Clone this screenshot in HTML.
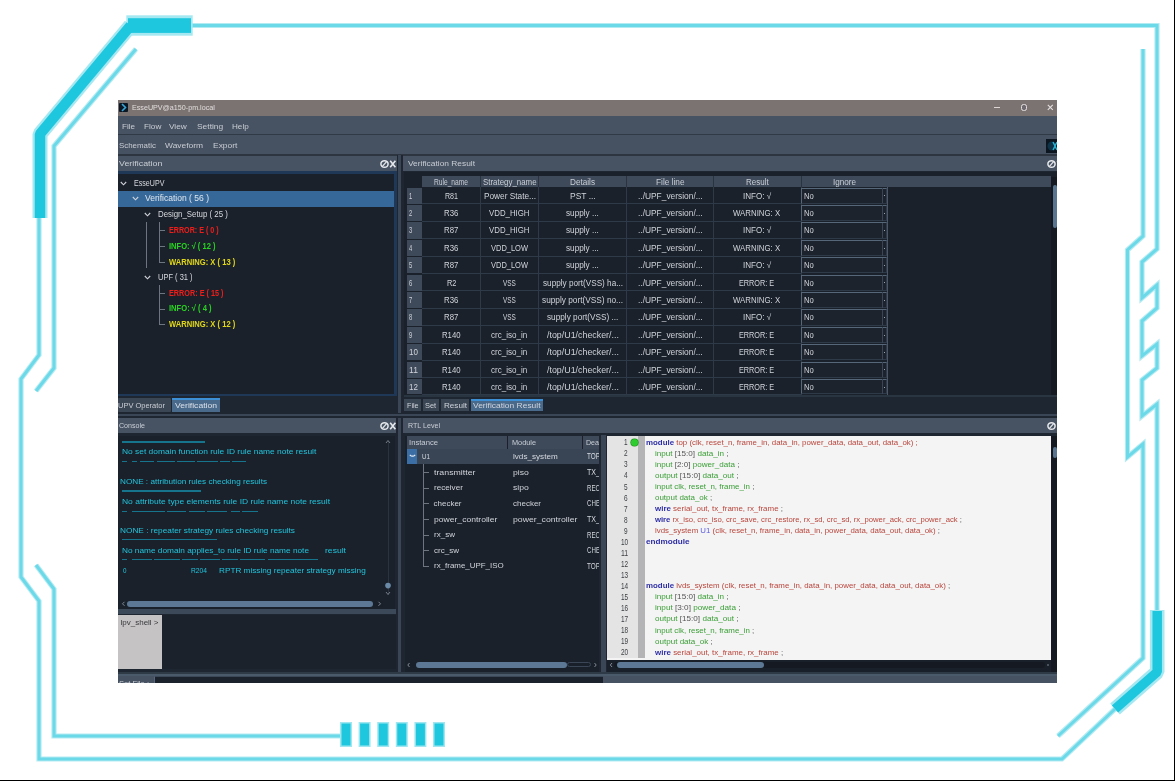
<!DOCTYPE html>
<html><head><meta charset="utf-8"><style>
html,body{margin:0;padding:0;width:1175px;height:781px;overflow:hidden;background:#fff;}
body{position:relative;filter:blur(0.4px);font-family:"Liberation Sans", sans-serif;}
body > div, body > span, body > svg{position:absolute;box-sizing:border-box;}
body > span{white-space:nowrap;transform-origin:0 50%;}
svg{position:absolute;left:0;top:0;}
</style></head><body>
<svg width="1175" height="781">
<polyline points="192,25.5 1157,25.5 1157,249 1142,262 1142,298 1157,285 1157,308 1142,321 1142,356 1157,344 1157,368 1142,380 1142,416 1157,404 1157,612" fill="none" stroke="#b3ebf3" stroke-width="5.2" stroke-linejoin="miter"/>
<polyline points="1115,709 1062,759 39,759 39,601 21,577 21,379 39,355 39,218" fill="none" stroke="#b3ebf3" stroke-width="5.2" stroke-linejoin="miter"/>
<polyline points="136,49 54,146 54,368 36,391" fill="none" stroke="#b3ebf3" stroke-width="5.2" stroke-linejoin="miter"/>
<polyline points="36,565 54,589 54,736 340,736" fill="none" stroke="#b3ebf3" stroke-width="5.2" stroke-linejoin="miter"/>
<polyline points="1143,49 1143,236 1127.5,250 1127.5,457 1143,444 1143,658 1058,736" fill="none" stroke="#b3ebf3" stroke-width="5.2" stroke-linejoin="miter"/>
<polyline points="192,25.5 1157,25.5 1157,249 1142,262 1142,298 1157,285 1157,308 1142,321 1142,356 1157,344 1157,368 1142,380 1142,416 1157,404 1157,612" fill="none" stroke="#6cd9e8" stroke-width="3" stroke-linejoin="miter"/>
<polyline points="1115,709 1062,759 39,759 39,601 21,577 21,379 39,355 39,218" fill="none" stroke="#6cd9e8" stroke-width="3" stroke-linejoin="miter"/>
<polyline points="136,49 54,146 54,368 36,391" fill="none" stroke="#6cd9e8" stroke-width="3" stroke-linejoin="miter"/>
<polyline points="36,565 54,589 54,736 340,736" fill="none" stroke="#6cd9e8" stroke-width="3" stroke-linejoin="miter"/>
<polyline points="1143,49 1143,236 1127.5,250 1127.5,457 1143,444 1143,658 1058,736" fill="none" stroke="#6cd9e8" stroke-width="3" stroke-linejoin="miter"/>
<polyline points="40,218 40,134 130.7,25.5" fill="none" stroke="#a6e8f1" stroke-width="15" stroke-linejoin="bevel"/>
<rect x="126.3" y="15.3" width="66.4" height="20.4" fill="#a6e8f1"/>
<polyline points="40,218 40,134 130.7,25.5" fill="none" stroke="#1ec7de" stroke-width="10.5" stroke-linejoin="bevel"/>
<rect x="128" y="18.2" width="63" height="14.7" fill="#1ec7de"/>
<polyline points="1157.2,610 1157.2,672 1115,709" fill="none" stroke="#a6e8f1" stroke-width="14.6" stroke-linejoin="bevel"/>
<polyline points="1157.2,611 1157.2,672 1115,709" fill="none" stroke="#1ec7de" stroke-width="9.5" stroke-linejoin="bevel"/>
<rect x="340.0" y="722" width="12" height="25" fill="#9fe6f0"/>
<rect x="341.5" y="723.5" width="9" height="22" fill="#1ec7de"/>
<rect x="358.6" y="722" width="12" height="25" fill="#9fe6f0"/>
<rect x="360.1" y="723.5" width="9" height="22" fill="#1ec7de"/>
<rect x="377.2" y="722" width="12" height="25" fill="#9fe6f0"/>
<rect x="378.7" y="723.5" width="9" height="22" fill="#1ec7de"/>
<rect x="395.8" y="722" width="12" height="25" fill="#9fe6f0"/>
<rect x="397.3" y="723.5" width="9" height="22" fill="#1ec7de"/>
<rect x="414.4" y="722" width="12" height="25" fill="#9fe6f0"/>
<rect x="415.9" y="723.5" width="9" height="22" fill="#1ec7de"/>
<rect x="433.0" y="722" width="12" height="25" fill="#9fe6f0"/>
<rect x="434.5" y="723.5" width="9" height="22" fill="#1ec7de"/>
<rect x="1174" y="0" width="1" height="781" fill="#000"/>
<rect x="0" y="780" width="1175" height="1" fill="#000"/>
</svg>
<div style="left:118px;top:100px;width:939px;height:16px;background:#7a7372;"></div><div style="left:118px;top:116px;width:939px;height:18px;background:#475262;"></div><div style="left:118px;top:134px;width:939px;height:1px;background:#303a46;"></div><div style="left:118px;top:135px;width:939px;height:20px;background:#465161;"></div><div style="left:118px;top:155px;width:939px;height:528px;background:#222a35;"></div><div style="left:118px;top:154.3px;width:939px;height:1.6999999999999886px;background:#2c3540;"></div><div style="left:118px;top:156px;width:278.5px;height:15.5px;background:#475363;"></div><div style="left:118px;top:171px;width:278.5px;height:225px;background:#1f3857;"></div><div style="left:118px;top:174px;width:275.5px;height:220px;background:#1b212b;"></div><div style="left:118px;top:396px;width:278.5px;height:17px;background:#1e2631;"></div><div style="left:397px;top:155px;width:6px;height:258px;background:#1f2631;"></div><div style="left:398px;top:155px;width:3px;height:258px;background:#3a4656;"></div><div style="left:403px;top:156px;width:654px;height:15.5px;background:#475363;"></div><div style="left:403px;top:171px;width:654px;height:242px;background:#1e2631;"></div><div style="left:404px;top:172px;width:653px;height:224px;background:#1b212b;"></div><div style="left:118px;top:413px;width:939px;height:5px;background:#1e2631;"></div><div style="left:118px;top:413.5px;width:939px;height:2.1999999999999886px;background:#3a4656;"></div><div style="left:118px;top:418px;width:278px;height:15px;background:#475363;"></div><div style="left:118px;top:433px;width:278px;height:239px;background:#1e2631;"></div><div style="left:118px;top:436px;width:277px;height:172.60000000000002px;background:#1b212b;"></div><div style="left:118px;top:608.6px;width:278px;height:5.399999999999977px;background:#3c4958;"></div><div style="left:118px;top:615px;width:44px;height:54px;background:#c5c3c4;"></div><div style="left:162px;top:615px;width:234px;height:54px;background:#1c222c;"></div><div style="left:396px;top:418px;width:7px;height:254px;background:#1f2631;"></div><div style="left:397.5px;top:418px;width:3.5px;height:254px;background:#3a4656;"></div><div style="left:403px;top:418px;width:654px;height:15px;background:#475363;"></div><div style="left:403px;top:433px;width:654px;height:239px;background:#1e2631;"></div><div style="left:405px;top:435.5px;width:194px;height:236.5px;background:#1b212b;"></div><div style="left:601.4px;top:435px;width:4.600000000000023px;height:237px;background:#3a4656;"></div><div style="left:607px;top:436px;width:444px;height:224px;background:#f4f4f4;"></div><div style="left:118px;top:672px;width:939px;height:4px;background:#2f3a47;"></div><div style="left:118px;top:674.3px;width:939px;height:1.5px;background:#4a5a6b;"></div><div style="left:118px;top:676px;width:939px;height:7px;background:#465262;"></div><div style="left:154px;top:676px;width:449px;height:7px;background:#1c222c;border-left:1px solid #56667a;border-top:1px solid #3a4858;"></div><div style="left:118.6px;top:102.8px;width:9.5px;height:8.900000000000006px;background:#0b1824;border-radius:1px;"></div><svg style="left:119px;top:103px" width="9" height="9"><polyline points="3,1 6.5,4.5 3,8" fill="none" stroke="#3aa6d6" stroke-width="1.6"/></svg><span style="left:131.70px;top:102.70px;font-size:8px;line-height:9.60px;color:#e2dcdc;font-family:'Liberation Sans', sans-serif;transform:scaleX(0.8941);">EsseUPV@a150-pm.local</span><div style="left:994px;top:107px;width:5.600000000000023px;height:1.2000000000000028px;background:#ddd6d6;"></div><div style="left:1021px;top:104px;width:6px;height:7px;background:#6f6a70;border:1.2px solid #e6e0e0;border-radius:2.5px;"></div><svg style="left:1047px;top:104px" width="7" height="7"><path d="M0.8,0.8 L5.8,5.8 M5.8,0.8 L0.8,5.8" stroke="#e6e0e0" stroke-width="1.1"/></svg><span style="left:122.20px;top:121.50px;font-size:8px;line-height:9.60px;color:#c8cdd4;font-family:'Liberation Sans', sans-serif;transform:scaleX(1.0162);">File</span><span style="left:143.60px;top:121.50px;font-size:8px;line-height:9.60px;color:#c8cdd4;font-family:'Liberation Sans', sans-serif;transform:scaleX(1.0242);">Flow</span><span style="left:169.30px;top:121.50px;font-size:8px;line-height:9.60px;color:#c8cdd4;font-family:'Liberation Sans', sans-serif;transform:scaleX(1.0347);">View</span><span style="left:196.70px;top:121.50px;font-size:8px;line-height:9.60px;color:#c8cdd4;font-family:'Liberation Sans', sans-serif;transform:scaleX(1.0519);">Setting</span><span style="left:231.80px;top:121.50px;font-size:8px;line-height:9.60px;color:#c8cdd4;font-family:'Liberation Sans', sans-serif;transform:scaleX(1.0150);">Help</span><span style="left:119.20px;top:141.40px;font-size:8px;line-height:9.60px;color:#c8cdd4;font-family:'Liberation Sans', sans-serif;transform:scaleX(0.9877);">Schematic</span><span style="left:165.10px;top:141.40px;font-size:8px;line-height:9.60px;color:#c8cdd4;font-family:'Liberation Sans', sans-serif;transform:scaleX(1.0538);">Waveform</span><span style="left:212.80px;top:141.40px;font-size:8px;line-height:9.60px;color:#c8cdd4;font-family:'Liberation Sans', sans-serif;transform:scaleX(1.0551);">Export</span><div style="left:1046px;top:139.3px;width:11px;height:14.0px;background:#0c1620;"></div><svg style="left:1046px;top:139px" width="11" height="14"><circle cx="6" cy="7" r="4.5" fill="#0f3448"/><path d="M7,3 L11,11 M11,3 L7,11" stroke="#27b7d9" stroke-width="1.4"/></svg><span style="left:118.90px;top:159.00px;font-size:8px;line-height:9.60px;color:#c8cdd4;font-family:'Liberation Sans', sans-serif;transform:scaleX(1.1088);">Verification</span><svg style="left:380px;top:159px" width="17" height="10"><ellipse cx="4.5" cy="5" rx="3.6" ry="3.3" fill="none" stroke="#e6e8ec" stroke-width="1.5"/><line x1="2.2" y1="7.6" x2="6.8" y2="2.4" stroke="#e6e8ec" stroke-width="1.3"/><path d="M10.2,1.8 L15.4,8.2 M15.4,1.8 L10.2,8.2" stroke="#e6e8ec" stroke-width="1.6"/></svg><div style="left:118px;top:191px;width:275.5px;height:15.5px;background:#36699a;"></div><svg style="left:119.9px;top:180.9px" width="7" height="5"><polyline points="0.8,1 3.5,3.8 6.2,1" fill="none" stroke="#cfd3da" stroke-width="1.1"/></svg><svg style="left:132.1px;top:196.3px" width="7" height="5"><polyline points="0.8,1 3.5,3.8 6.2,1" fill="none" stroke="#cfd3da" stroke-width="1.1"/></svg><svg style="left:144.0px;top:212.1px" width="7" height="5"><polyline points="0.8,1 3.5,3.8 6.2,1" fill="none" stroke="#cfd3da" stroke-width="1.1"/></svg><svg style="left:144.0px;top:274.9px" width="7" height="5"><polyline points="0.8,1 3.5,3.8 6.2,1" fill="none" stroke="#cfd3da" stroke-width="1.1"/></svg><span style="left:134.00px;top:178.00px;font-size:9px;line-height:10.80px;color:#d6d9de;font-family:'Liberation Sans', sans-serif;transform:scaleX(0.7893);">EsseUPV</span><span style="left:144.60px;top:193.40px;font-size:9px;line-height:10.80px;color:#dfe6ee;font-family:'Liberation Sans', sans-serif;transform:scaleX(0.9477);">Verification ( 56 )</span><span style="left:158.00px;top:209.40px;font-size:9px;line-height:10.80px;color:#d6d9de;font-family:'Liberation Sans', sans-serif;transform:scaleX(0.8720);">Design_Setup ( 25 )</span><span style="left:158.00px;top:272.20px;font-size:9px;line-height:10.80px;color:#d6d9de;font-family:'Liberation Sans', sans-serif;transform:scaleX(0.8334);">UPF ( 31 )</span><span style="left:169.20px;top:224.80px;font-size:9px;line-height:10.80px;color:#f01e1a;font-weight:bold;font-family:'Liberation Sans', sans-serif;transform:scaleX(0.7950);">ERROR: E ( 0 )</span><span style="left:169.20px;top:240.80px;font-size:9px;line-height:10.80px;color:#26d421;font-weight:bold;font-family:'Liberation Sans', sans-serif;transform:scaleX(0.8385);">INFO: √ ( 12 )</span><span style="left:169.20px;top:256.50px;font-size:9px;line-height:10.80px;color:#e2d916;font-weight:bold;font-family:'Liberation Sans', sans-serif;transform:scaleX(0.8444);">WARNING: X ( 13 )</span><span style="left:169.20px;top:287.60px;font-size:9px;line-height:10.80px;color:#f01e1a;font-weight:bold;font-family:'Liberation Sans', sans-serif;transform:scaleX(0.8072);">ERROR: E ( 15 )</span><span style="left:169.20px;top:303.20px;font-size:9px;line-height:10.80px;color:#26d421;font-weight:bold;font-family:'Liberation Sans', sans-serif;transform:scaleX(0.8446);">INFO: √ ( 4 )</span><span style="left:169.20px;top:318.90px;font-size:9px;line-height:10.80px;color:#e2d916;font-weight:bold;font-family:'Liberation Sans', sans-serif;transform:scaleX(0.8444);">WARNING: X ( 12 )</span><div style="left:146.3px;top:222px;width:1.0px;height:46px;background:#6d7580;"></div><div style="left:158.6px;top:222px;width:1.0px;height:40.39999999999998px;background:#6d7580;"></div><div style="left:158.6px;top:230.2px;width:6.400000000000006px;height:1.0px;background:#6d7580;"></div><div style="left:158.6px;top:246.2px;width:6.400000000000006px;height:1.0px;background:#6d7580;"></div><div style="left:158.6px;top:261.9px;width:6.400000000000006px;height:1.0px;background:#6d7580;"></div><div style="left:158.6px;top:285px;width:1.0px;height:39.80000000000001px;background:#6d7580;"></div><div style="left:158.6px;top:293.0px;width:6.400000000000006px;height:1.0px;background:#6d7580;"></div><div style="left:158.6px;top:308.6px;width:6.400000000000006px;height:1.0px;background:#6d7580;"></div><div style="left:158.6px;top:324.3px;width:6.400000000000006px;height:1.0px;background:#6d7580;"></div><div style="left:118px;top:398.3px;width:53px;height:13.699999999999989px;background:#3b4654;border-radius:1px;"></div><div style="left:172px;top:398.3px;width:48px;height:13.699999999999989px;background:#4a6a8c;"></div><div style="left:172px;top:398.3px;width:48px;height:1.6999999999999886px;background:#3d8fd6;"></div><span style="left:118.00px;top:400.80px;font-size:8px;line-height:9.60px;color:#c9ced6;font-family:'Liberation Sans', sans-serif;transform:scaleX(0.9353);">UPV Operator</span><span style="left:175.00px;top:400.80px;font-size:8px;line-height:9.60px;color:#d9e0e8;font-family:'Liberation Sans', sans-serif;transform:scaleX(1.0731);">Verification</span><span style="left:407.80px;top:159.20px;font-size:8px;line-height:9.60px;color:#c8cdd4;font-family:'Liberation Sans', sans-serif;transform:scaleX(1.0464);">Verification Result</span><svg style="left:1047px;top:159px" width="10" height="10"><ellipse cx="4.5" cy="5" rx="3.6" ry="3.3" fill="none" stroke="#e6e8ec" stroke-width="1.5"/><line x1="2.2" y1="7.6" x2="6.8" y2="2.4" stroke="#e6e8ec" stroke-width="1.3"/><path d="M10.2,1.8 L15.4,8.2" stroke="#e6e8ec" stroke-width="1.6"/></svg><div style="left:406.5px;top:175.8px;width:15.5px;height:11.199999999999989px;background:#1b212b;"></div><div style="left:422px;top:175.8px;width:629px;height:11.199999999999989px;background:#3e4a5a;"></div><div style="left:480.0px;top:175.8px;width:1.0px;height:11.199999999999989px;background:#2a3441;"></div><div style="left:537.9px;top:175.8px;width:1.0px;height:11.199999999999989px;background:#2a3441;"></div><div style="left:626.0px;top:175.8px;width:1.0px;height:11.199999999999989px;background:#2a3441;"></div><div style="left:712.7px;top:175.8px;width:1.0px;height:11.199999999999989px;background:#2a3441;"></div><div style="left:800.5px;top:175.8px;width:1.0px;height:11.199999999999989px;background:#2a3441;"></div><span style="left:434.25px;top:176.56px;font-size:8.4px;line-height:10.08px;color:#c9ced6;font-family:'Liberation Sans', sans-serif;transform:scaleX(0.7936);">Rule_name</span><span style="left:482.65px;top:176.56px;font-size:8.4px;line-height:10.08px;color:#c9ced6;font-family:'Liberation Sans', sans-serif;transform:scaleX(0.9435);">Strategy_name</span><span style="left:569.95px;top:176.56px;font-size:8.4px;line-height:10.08px;color:#c9ced6;font-family:'Liberation Sans', sans-serif;transform:scaleX(0.9762);">Details</span><span style="left:655.60px;top:176.56px;font-size:8.4px;line-height:10.08px;color:#c9ced6;font-family:'Liberation Sans', sans-serif;transform:scaleX(0.9875);">File line</span><span style="left:745.75px;top:176.56px;font-size:8.4px;line-height:10.08px;color:#c9ced6;font-family:'Liberation Sans', sans-serif;transform:scaleX(0.9558);">Result</span><span style="left:833.30px;top:176.56px;font-size:8.4px;line-height:10.08px;color:#c9ced6;font-family:'Liberation Sans', sans-serif;transform:scaleX(0.9684);">Ignore</span><div style="left:406.5px;top:187.5px;width:15.5px;height:16.400000000000006px;background:#3e4a5a;"></div><div style="left:422px;top:203.4px;width:379px;height:1.0px;background:#2e3a48;"></div><div style="left:480.0px;top:187.0px;width:1.0px;height:17.400000000000006px;background:#2e3a48;"></div><div style="left:537.9px;top:187.0px;width:1.0px;height:17.400000000000006px;background:#2e3a48;"></div><div style="left:626.0px;top:187.0px;width:1.0px;height:17.400000000000006px;background:#2e3a48;"></div><div style="left:712.7px;top:187.0px;width:1.0px;height:17.400000000000006px;background:#2e3a48;"></div><div style="left:800.5px;top:187.0px;width:1.0px;height:17.400000000000006px;background:#2e3a48;"></div><div style="left:801px;top:187.5px;width:86px;height:16.400000000000006px;background:#1d232d;border:1px solid #2e3a48;border-top-color:#56677a;border-left-color:#56677a;"></div><div style="left:882px;top:188.0px;width:1px;height:15.400000000000006px;background:#3a4656;"></div><span style="left:409.30px;top:190.68px;font-size:8.7px;line-height:10.44px;color:#d0d4da;font-family:'Liberation Sans', sans-serif;transform:scaleX(0.6606);">1</span><span style="left:444.70px;top:190.68px;font-size:8.7px;line-height:10.44px;color:#d0d4da;font-family:'Liberation Sans', sans-serif;transform:scaleX(0.8157);">R81</span><span style="left:483.50px;top:190.68px;font-size:8.7px;line-height:10.44px;color:#d0d4da;font-family:'Liberation Sans', sans-serif;transform:scaleX(0.9528);">Power State...</span><span style="left:569.65px;top:190.68px;font-size:8.7px;line-height:10.44px;color:#d0d4da;font-family:'Liberation Sans', sans-serif;transform:scaleX(0.9733);">PST ...</span><span style="left:637.65px;top:190.68px;font-size:8.7px;line-height:10.44px;color:#d0d4da;font-family:'Liberation Sans', sans-serif;transform:scaleX(0.9641);">../UPF_version/...</span><span style="left:742.90px;top:190.68px;font-size:8.7px;line-height:10.44px;color:#d0d4da;font-family:'Liberation Sans', sans-serif;transform:scaleX(0.9289);">INFO: √</span><span style="left:804.20px;top:190.68px;font-size:8.7px;line-height:10.44px;color:#d0d4da;font-family:'Liberation Sans', sans-serif;transform:scaleX(0.8821);">No</span><div style="left:884.2px;top:195.39999999999998px;width:1.1999999999999318px;height:1.0px;background:#9aa3ad;"></div><div style="left:406.5px;top:204.9px;width:15.5px;height:16.400000000000006px;background:#3e4a5a;"></div><div style="left:422px;top:220.8px;width:379px;height:1.0px;background:#2e3a48;"></div><div style="left:480.0px;top:204.4px;width:1.0px;height:17.400000000000006px;background:#2e3a48;"></div><div style="left:537.9px;top:204.4px;width:1.0px;height:17.400000000000006px;background:#2e3a48;"></div><div style="left:626.0px;top:204.4px;width:1.0px;height:17.400000000000006px;background:#2e3a48;"></div><div style="left:712.7px;top:204.4px;width:1.0px;height:17.400000000000006px;background:#2e3a48;"></div><div style="left:800.5px;top:204.4px;width:1.0px;height:17.400000000000006px;background:#2e3a48;"></div><div style="left:801px;top:204.9px;width:86px;height:16.400000000000006px;background:#1d232d;border:1px solid #2e3a48;border-top-color:#56677a;border-left-color:#56677a;"></div><div style="left:882px;top:205.4px;width:1px;height:15.400000000000006px;background:#3a4656;"></div><span style="left:409.30px;top:208.08px;font-size:8.7px;line-height:10.44px;color:#d0d4da;font-family:'Liberation Sans', sans-serif;transform:scaleX(0.6606);">2</span><span style="left:444.05px;top:208.08px;font-size:8.7px;line-height:10.44px;color:#d0d4da;font-family:'Liberation Sans', sans-serif;transform:scaleX(0.8973);">R36</span><span style="left:489.25px;top:208.08px;font-size:8.7px;line-height:10.44px;color:#d0d4da;font-family:'Liberation Sans', sans-serif;transform:scaleX(0.9019);">VDD_HIGH</span><span style="left:566.10px;top:208.08px;font-size:8.7px;line-height:10.44px;color:#d0d4da;font-family:'Liberation Sans', sans-serif;transform:scaleX(0.9430);">supply ...</span><span style="left:637.65px;top:208.08px;font-size:8.7px;line-height:10.44px;color:#d0d4da;font-family:'Liberation Sans', sans-serif;transform:scaleX(0.9641);">../UPF_version/...</span><span style="left:733.40px;top:208.08px;font-size:8.7px;line-height:10.44px;color:#d0d4da;font-family:'Liberation Sans', sans-serif;transform:scaleX(0.9025);">WARNING: X</span><span style="left:804.20px;top:208.08px;font-size:8.7px;line-height:10.44px;color:#d0d4da;font-family:'Liberation Sans', sans-serif;transform:scaleX(0.8821);">No</span><div style="left:884.2px;top:212.79999999999998px;width:1.1999999999999318px;height:1.0px;background:#9aa3ad;"></div><div style="left:406.5px;top:222.3px;width:15.5px;height:16.400000000000006px;background:#3e4a5a;"></div><div style="left:422px;top:238.20000000000002px;width:379px;height:1.0px;background:#2e3a48;"></div><div style="left:480.0px;top:221.8px;width:1.0px;height:17.400000000000006px;background:#2e3a48;"></div><div style="left:537.9px;top:221.8px;width:1.0px;height:17.400000000000006px;background:#2e3a48;"></div><div style="left:626.0px;top:221.8px;width:1.0px;height:17.400000000000006px;background:#2e3a48;"></div><div style="left:712.7px;top:221.8px;width:1.0px;height:17.400000000000006px;background:#2e3a48;"></div><div style="left:800.5px;top:221.8px;width:1.0px;height:17.400000000000006px;background:#2e3a48;"></div><div style="left:801px;top:222.3px;width:86px;height:16.400000000000006px;background:#1d232d;border:1px solid #2e3a48;border-top-color:#56677a;border-left-color:#56677a;"></div><div style="left:882px;top:222.8px;width:1px;height:15.400000000000006px;background:#3a4656;"></div><span style="left:409.30px;top:225.48px;font-size:8.7px;line-height:10.44px;color:#d0d4da;font-family:'Liberation Sans', sans-serif;transform:scaleX(0.6606);">3</span><span style="left:444.05px;top:225.48px;font-size:8.7px;line-height:10.44px;color:#d0d4da;font-family:'Liberation Sans', sans-serif;transform:scaleX(0.8973);">R87</span><span style="left:489.25px;top:225.48px;font-size:8.7px;line-height:10.44px;color:#d0d4da;font-family:'Liberation Sans', sans-serif;transform:scaleX(0.9019);">VDD_HIGH</span><span style="left:566.10px;top:225.48px;font-size:8.7px;line-height:10.44px;color:#d0d4da;font-family:'Liberation Sans', sans-serif;transform:scaleX(0.9430);">supply ...</span><span style="left:637.65px;top:225.48px;font-size:8.7px;line-height:10.44px;color:#d0d4da;font-family:'Liberation Sans', sans-serif;transform:scaleX(0.9641);">../UPF_version/...</span><span style="left:742.90px;top:225.48px;font-size:8.7px;line-height:10.44px;color:#d0d4da;font-family:'Liberation Sans', sans-serif;transform:scaleX(0.9289);">INFO: √</span><span style="left:804.20px;top:225.48px;font-size:8.7px;line-height:10.44px;color:#d0d4da;font-family:'Liberation Sans', sans-serif;transform:scaleX(0.8821);">No</span><div style="left:884.2px;top:230.2px;width:1.1999999999999318px;height:1.0px;background:#9aa3ad;"></div><div style="left:406.5px;top:239.7px;width:15.5px;height:16.399999999999977px;background:#3e4a5a;"></div><div style="left:422px;top:255.59999999999997px;width:379px;height:1.0px;background:#2e3a48;"></div><div style="left:480.0px;top:239.2px;width:1.0px;height:17.399999999999977px;background:#2e3a48;"></div><div style="left:537.9px;top:239.2px;width:1.0px;height:17.399999999999977px;background:#2e3a48;"></div><div style="left:626.0px;top:239.2px;width:1.0px;height:17.399999999999977px;background:#2e3a48;"></div><div style="left:712.7px;top:239.2px;width:1.0px;height:17.399999999999977px;background:#2e3a48;"></div><div style="left:800.5px;top:239.2px;width:1.0px;height:17.399999999999977px;background:#2e3a48;"></div><div style="left:801px;top:239.7px;width:86px;height:16.399999999999977px;background:#1d232d;border:1px solid #2e3a48;border-top-color:#56677a;border-left-color:#56677a;"></div><div style="left:882px;top:240.2px;width:1px;height:15.399999999999977px;background:#3a4656;"></div><span style="left:409.30px;top:242.88px;font-size:8.7px;line-height:10.44px;color:#d0d4da;font-family:'Liberation Sans', sans-serif;transform:scaleX(0.6606);">4</span><span style="left:444.05px;top:242.88px;font-size:8.7px;line-height:10.44px;color:#d0d4da;font-family:'Liberation Sans', sans-serif;transform:scaleX(0.8973);">R36</span><span style="left:491.00px;top:242.88px;font-size:8.7px;line-height:10.44px;color:#d0d4da;font-family:'Liberation Sans', sans-serif;transform:scaleX(0.8611);">VDD_LOW</span><span style="left:566.10px;top:242.88px;font-size:8.7px;line-height:10.44px;color:#d0d4da;font-family:'Liberation Sans', sans-serif;transform:scaleX(0.9430);">supply ...</span><span style="left:637.65px;top:242.88px;font-size:8.7px;line-height:10.44px;color:#d0d4da;font-family:'Liberation Sans', sans-serif;transform:scaleX(0.9641);">../UPF_version/...</span><span style="left:733.40px;top:242.88px;font-size:8.7px;line-height:10.44px;color:#d0d4da;font-family:'Liberation Sans', sans-serif;transform:scaleX(0.9025);">WARNING: X</span><span style="left:804.20px;top:242.88px;font-size:8.7px;line-height:10.44px;color:#d0d4da;font-family:'Liberation Sans', sans-serif;transform:scaleX(0.8821);">No</span><div style="left:884.2px;top:247.59999999999997px;width:1.1999999999999318px;height:1.0px;background:#9aa3ad;"></div><div style="left:406.5px;top:257.1px;width:15.5px;height:16.399999999999977px;background:#3e4a5a;"></div><div style="left:422px;top:273.0px;width:379px;height:1.0px;background:#2e3a48;"></div><div style="left:480.0px;top:256.6px;width:1.0px;height:17.399999999999977px;background:#2e3a48;"></div><div style="left:537.9px;top:256.6px;width:1.0px;height:17.399999999999977px;background:#2e3a48;"></div><div style="left:626.0px;top:256.6px;width:1.0px;height:17.399999999999977px;background:#2e3a48;"></div><div style="left:712.7px;top:256.6px;width:1.0px;height:17.399999999999977px;background:#2e3a48;"></div><div style="left:800.5px;top:256.6px;width:1.0px;height:17.399999999999977px;background:#2e3a48;"></div><div style="left:801px;top:257.1px;width:86px;height:16.399999999999977px;background:#1d232d;border:1px solid #2e3a48;border-top-color:#56677a;border-left-color:#56677a;"></div><div style="left:882px;top:257.6px;width:1px;height:15.399999999999977px;background:#3a4656;"></div><span style="left:409.30px;top:260.28px;font-size:8.7px;line-height:10.44px;color:#d0d4da;font-family:'Liberation Sans', sans-serif;transform:scaleX(0.6606);">5</span><span style="left:444.05px;top:260.28px;font-size:8.7px;line-height:10.44px;color:#d0d4da;font-family:'Liberation Sans', sans-serif;transform:scaleX(0.8973);">R87</span><span style="left:491.00px;top:260.28px;font-size:8.7px;line-height:10.44px;color:#d0d4da;font-family:'Liberation Sans', sans-serif;transform:scaleX(0.8611);">VDD_LOW</span><span style="left:566.10px;top:260.28px;font-size:8.7px;line-height:10.44px;color:#d0d4da;font-family:'Liberation Sans', sans-serif;transform:scaleX(0.9430);">supply ...</span><span style="left:637.65px;top:260.28px;font-size:8.7px;line-height:10.44px;color:#d0d4da;font-family:'Liberation Sans', sans-serif;transform:scaleX(0.9641);">../UPF_version/...</span><span style="left:742.90px;top:260.28px;font-size:8.7px;line-height:10.44px;color:#d0d4da;font-family:'Liberation Sans', sans-serif;transform:scaleX(0.9289);">INFO: √</span><span style="left:804.20px;top:260.28px;font-size:8.7px;line-height:10.44px;color:#d0d4da;font-family:'Liberation Sans', sans-serif;transform:scaleX(0.8821);">No</span><div style="left:884.2px;top:265.0px;width:1.1999999999999318px;height:1.0px;background:#9aa3ad;"></div><div style="left:406.5px;top:274.5px;width:15.5px;height:16.399999999999977px;background:#3e4a5a;"></div><div style="left:422px;top:290.4px;width:379px;height:1.0px;background:#2e3a48;"></div><div style="left:480.0px;top:274.0px;width:1.0px;height:17.399999999999977px;background:#2e3a48;"></div><div style="left:537.9px;top:274.0px;width:1.0px;height:17.399999999999977px;background:#2e3a48;"></div><div style="left:626.0px;top:274.0px;width:1.0px;height:17.399999999999977px;background:#2e3a48;"></div><div style="left:712.7px;top:274.0px;width:1.0px;height:17.399999999999977px;background:#2e3a48;"></div><div style="left:800.5px;top:274.0px;width:1.0px;height:17.399999999999977px;background:#2e3a48;"></div><div style="left:801px;top:274.5px;width:86px;height:16.399999999999977px;background:#1d232d;border:1px solid #2e3a48;border-top-color:#56677a;border-left-color:#56677a;"></div><div style="left:882px;top:275.0px;width:1px;height:15.399999999999977px;background:#3a4656;"></div><span style="left:409.30px;top:277.68px;font-size:8.7px;line-height:10.44px;color:#d0d4da;font-family:'Liberation Sans', sans-serif;transform:scaleX(0.6606);">6</span><span style="left:446.50px;top:277.68px;font-size:8.7px;line-height:10.44px;color:#d0d4da;font-family:'Liberation Sans', sans-serif;transform:scaleX(0.8461);">R2</span><span style="left:503.10px;top:277.68px;font-size:8.7px;line-height:10.44px;color:#d0d4da;font-family:'Liberation Sans', sans-serif;transform:scaleX(0.7360);">VSS</span><span style="left:542.50px;top:277.68px;font-size:8.7px;line-height:10.44px;color:#d0d4da;font-family:'Liberation Sans', sans-serif;transform:scaleX(0.9413);">supply port(VSS) ha...</span><span style="left:637.65px;top:277.68px;font-size:8.7px;line-height:10.44px;color:#d0d4da;font-family:'Liberation Sans', sans-serif;transform:scaleX(0.9641);">../UPF_version/...</span><span style="left:739.40px;top:277.68px;font-size:8.7px;line-height:10.44px;color:#d0d4da;font-family:'Liberation Sans', sans-serif;transform:scaleX(0.8381);">ERROR: E</span><span style="left:804.20px;top:277.68px;font-size:8.7px;line-height:10.44px;color:#d0d4da;font-family:'Liberation Sans', sans-serif;transform:scaleX(0.8821);">No</span><div style="left:884.2px;top:282.4px;width:1.1999999999999318px;height:1.0px;background:#9aa3ad;"></div><div style="left:406.5px;top:291.9px;width:15.5px;height:16.399999999999977px;background:#3e4a5a;"></div><div style="left:422px;top:307.79999999999995px;width:379px;height:1.0px;background:#2e3a48;"></div><div style="left:480.0px;top:291.4px;width:1.0px;height:17.399999999999977px;background:#2e3a48;"></div><div style="left:537.9px;top:291.4px;width:1.0px;height:17.399999999999977px;background:#2e3a48;"></div><div style="left:626.0px;top:291.4px;width:1.0px;height:17.399999999999977px;background:#2e3a48;"></div><div style="left:712.7px;top:291.4px;width:1.0px;height:17.399999999999977px;background:#2e3a48;"></div><div style="left:800.5px;top:291.4px;width:1.0px;height:17.399999999999977px;background:#2e3a48;"></div><div style="left:801px;top:291.9px;width:86px;height:16.399999999999977px;background:#1d232d;border:1px solid #2e3a48;border-top-color:#56677a;border-left-color:#56677a;"></div><div style="left:882px;top:292.4px;width:1px;height:15.399999999999977px;background:#3a4656;"></div><span style="left:409.30px;top:295.08px;font-size:8.7px;line-height:10.44px;color:#d0d4da;font-family:'Liberation Sans', sans-serif;transform:scaleX(0.6606);">7</span><span style="left:444.05px;top:295.08px;font-size:8.7px;line-height:10.44px;color:#d0d4da;font-family:'Liberation Sans', sans-serif;transform:scaleX(0.8973);">R36</span><span style="left:503.10px;top:295.08px;font-size:8.7px;line-height:10.44px;color:#d0d4da;font-family:'Liberation Sans', sans-serif;transform:scaleX(0.7360);">VSS</span><span style="left:542.00px;top:295.08px;font-size:8.7px;line-height:10.44px;color:#d0d4da;font-family:'Liberation Sans', sans-serif;transform:scaleX(0.9531);">supply port(VSS) no...</span><span style="left:637.65px;top:295.08px;font-size:8.7px;line-height:10.44px;color:#d0d4da;font-family:'Liberation Sans', sans-serif;transform:scaleX(0.9641);">../UPF_version/...</span><span style="left:733.40px;top:295.08px;font-size:8.7px;line-height:10.44px;color:#d0d4da;font-family:'Liberation Sans', sans-serif;transform:scaleX(0.9025);">WARNING: X</span><span style="left:804.20px;top:295.08px;font-size:8.7px;line-height:10.44px;color:#d0d4da;font-family:'Liberation Sans', sans-serif;transform:scaleX(0.8821);">No</span><div style="left:884.2px;top:299.79999999999995px;width:1.1999999999999318px;height:1.0px;background:#9aa3ad;"></div><div style="left:406.5px;top:309.29999999999995px;width:15.5px;height:16.399999999999977px;background:#3e4a5a;"></div><div style="left:422px;top:325.19999999999993px;width:379px;height:1.0px;background:#2e3a48;"></div><div style="left:480.0px;top:308.79999999999995px;width:1.0px;height:17.399999999999977px;background:#2e3a48;"></div><div style="left:537.9px;top:308.79999999999995px;width:1.0px;height:17.399999999999977px;background:#2e3a48;"></div><div style="left:626.0px;top:308.79999999999995px;width:1.0px;height:17.399999999999977px;background:#2e3a48;"></div><div style="left:712.7px;top:308.79999999999995px;width:1.0px;height:17.399999999999977px;background:#2e3a48;"></div><div style="left:800.5px;top:308.79999999999995px;width:1.0px;height:17.399999999999977px;background:#2e3a48;"></div><div style="left:801px;top:309.29999999999995px;width:86px;height:16.399999999999977px;background:#1d232d;border:1px solid #2e3a48;border-top-color:#56677a;border-left-color:#56677a;"></div><div style="left:882px;top:309.79999999999995px;width:1px;height:15.399999999999977px;background:#3a4656;"></div><span style="left:409.30px;top:312.48px;font-size:8.7px;line-height:10.44px;color:#d0d4da;font-family:'Liberation Sans', sans-serif;transform:scaleX(0.6606);">8</span><span style="left:444.05px;top:312.48px;font-size:8.7px;line-height:10.44px;color:#d0d4da;font-family:'Liberation Sans', sans-serif;transform:scaleX(0.8973);">R87</span><span style="left:503.10px;top:312.48px;font-size:8.7px;line-height:10.44px;color:#d0d4da;font-family:'Liberation Sans', sans-serif;transform:scaleX(0.7360);">VSS</span><span style="left:546.85px;top:312.48px;font-size:8.7px;line-height:10.44px;color:#d0d4da;font-family:'Liberation Sans', sans-serif;transform:scaleX(0.9465);">supply port(VSS) ...</span><span style="left:637.65px;top:312.48px;font-size:8.7px;line-height:10.44px;color:#d0d4da;font-family:'Liberation Sans', sans-serif;transform:scaleX(0.9641);">../UPF_version/...</span><span style="left:742.90px;top:312.48px;font-size:8.7px;line-height:10.44px;color:#d0d4da;font-family:'Liberation Sans', sans-serif;transform:scaleX(0.9289);">INFO: √</span><span style="left:804.20px;top:312.48px;font-size:8.7px;line-height:10.44px;color:#d0d4da;font-family:'Liberation Sans', sans-serif;transform:scaleX(0.8821);">No</span><div style="left:884.2px;top:317.19999999999993px;width:1.1999999999999318px;height:1.0px;background:#9aa3ad;"></div><div style="left:406.5px;top:326.7px;width:15.5px;height:16.399999999999977px;background:#3e4a5a;"></div><div style="left:422px;top:342.59999999999997px;width:379px;height:1.0px;background:#2e3a48;"></div><div style="left:480.0px;top:326.2px;width:1.0px;height:17.399999999999977px;background:#2e3a48;"></div><div style="left:537.9px;top:326.2px;width:1.0px;height:17.399999999999977px;background:#2e3a48;"></div><div style="left:626.0px;top:326.2px;width:1.0px;height:17.399999999999977px;background:#2e3a48;"></div><div style="left:712.7px;top:326.2px;width:1.0px;height:17.399999999999977px;background:#2e3a48;"></div><div style="left:800.5px;top:326.2px;width:1.0px;height:17.399999999999977px;background:#2e3a48;"></div><div style="left:801px;top:326.7px;width:86px;height:16.399999999999977px;background:#1d232d;border:1px solid #2e3a48;border-top-color:#56677a;border-left-color:#56677a;"></div><div style="left:882px;top:327.2px;width:1px;height:15.399999999999977px;background:#3a4656;"></div><span style="left:409.30px;top:329.88px;font-size:8.7px;line-height:10.44px;color:#d0d4da;font-family:'Liberation Sans', sans-serif;transform:scaleX(0.6606);">9</span><span style="left:441.95px;top:329.88px;font-size:8.7px;line-height:10.44px;color:#d0d4da;font-family:'Liberation Sans', sans-serif;transform:scaleX(0.8902);">R140</span><span style="left:491.40px;top:329.88px;font-size:8.7px;line-height:10.44px;color:#d0d4da;font-family:'Liberation Sans', sans-serif;transform:scaleX(0.9252);">crc_iso_in</span><span style="left:546.55px;top:329.88px;font-size:8.7px;line-height:10.44px;color:#d0d4da;font-family:'Liberation Sans', sans-serif;transform:scaleX(1.0199);">/top/U1/checker/...</span><span style="left:637.65px;top:329.88px;font-size:8.7px;line-height:10.44px;color:#d0d4da;font-family:'Liberation Sans', sans-serif;transform:scaleX(0.9641);">../UPF_version/...</span><span style="left:739.40px;top:329.88px;font-size:8.7px;line-height:10.44px;color:#d0d4da;font-family:'Liberation Sans', sans-serif;transform:scaleX(0.8381);">ERROR: E</span><span style="left:804.20px;top:329.88px;font-size:8.7px;line-height:10.44px;color:#d0d4da;font-family:'Liberation Sans', sans-serif;transform:scaleX(0.8821);">No</span><div style="left:884.2px;top:334.59999999999997px;width:1.1999999999999318px;height:1.0px;background:#9aa3ad;"></div><div style="left:406.5px;top:344.1px;width:15.5px;height:16.399999999999977px;background:#3e4a5a;"></div><div style="left:422px;top:360.0px;width:379px;height:1.0px;background:#2e3a48;"></div><div style="left:480.0px;top:343.6px;width:1.0px;height:17.399999999999977px;background:#2e3a48;"></div><div style="left:537.9px;top:343.6px;width:1.0px;height:17.399999999999977px;background:#2e3a48;"></div><div style="left:626.0px;top:343.6px;width:1.0px;height:17.399999999999977px;background:#2e3a48;"></div><div style="left:712.7px;top:343.6px;width:1.0px;height:17.399999999999977px;background:#2e3a48;"></div><div style="left:800.5px;top:343.6px;width:1.0px;height:17.399999999999977px;background:#2e3a48;"></div><div style="left:801px;top:344.1px;width:86px;height:16.399999999999977px;background:#1d232d;border:1px solid #2e3a48;border-top-color:#56677a;border-left-color:#56677a;"></div><div style="left:882px;top:344.6px;width:1px;height:15.399999999999977px;background:#3a4656;"></div><span style="left:409.30px;top:347.28px;font-size:8.7px;line-height:10.44px;color:#d0d4da;font-family:'Liberation Sans', sans-serif;transform:scaleX(0.9202);">10</span><span style="left:441.95px;top:347.28px;font-size:8.7px;line-height:10.44px;color:#d0d4da;font-family:'Liberation Sans', sans-serif;transform:scaleX(0.8902);">R140</span><span style="left:491.40px;top:347.28px;font-size:8.7px;line-height:10.44px;color:#d0d4da;font-family:'Liberation Sans', sans-serif;transform:scaleX(0.9252);">crc_iso_in</span><span style="left:546.55px;top:347.28px;font-size:8.7px;line-height:10.44px;color:#d0d4da;font-family:'Liberation Sans', sans-serif;transform:scaleX(1.0199);">/top/U1/checker/...</span><span style="left:637.65px;top:347.28px;font-size:8.7px;line-height:10.44px;color:#d0d4da;font-family:'Liberation Sans', sans-serif;transform:scaleX(0.9641);">../UPF_version/...</span><span style="left:739.40px;top:347.28px;font-size:8.7px;line-height:10.44px;color:#d0d4da;font-family:'Liberation Sans', sans-serif;transform:scaleX(0.8381);">ERROR: E</span><span style="left:804.20px;top:347.28px;font-size:8.7px;line-height:10.44px;color:#d0d4da;font-family:'Liberation Sans', sans-serif;transform:scaleX(0.8821);">No</span><div style="left:884.2px;top:352.0px;width:1.1999999999999318px;height:1.0px;background:#9aa3ad;"></div><div style="left:406.5px;top:361.5px;width:15.5px;height:16.399999999999977px;background:#3e4a5a;"></div><div style="left:422px;top:377.4px;width:379px;height:1.0px;background:#2e3a48;"></div><div style="left:480.0px;top:361.0px;width:1.0px;height:17.399999999999977px;background:#2e3a48;"></div><div style="left:537.9px;top:361.0px;width:1.0px;height:17.399999999999977px;background:#2e3a48;"></div><div style="left:626.0px;top:361.0px;width:1.0px;height:17.399999999999977px;background:#2e3a48;"></div><div style="left:712.7px;top:361.0px;width:1.0px;height:17.399999999999977px;background:#2e3a48;"></div><div style="left:800.5px;top:361.0px;width:1.0px;height:17.399999999999977px;background:#2e3a48;"></div><div style="left:801px;top:361.5px;width:86px;height:16.399999999999977px;background:#1d232d;border:1px solid #2e3a48;border-top-color:#56677a;border-left-color:#56677a;"></div><div style="left:882px;top:362.0px;width:1px;height:15.399999999999977px;background:#3a4656;"></div><span style="left:409.30px;top:364.68px;font-size:8.7px;line-height:10.44px;color:#d0d4da;font-family:'Liberation Sans', sans-serif;transform:scaleX(0.9855);">11</span><span style="left:441.95px;top:364.68px;font-size:8.7px;line-height:10.44px;color:#d0d4da;font-family:'Liberation Sans', sans-serif;transform:scaleX(0.8902);">R140</span><span style="left:491.40px;top:364.68px;font-size:8.7px;line-height:10.44px;color:#d0d4da;font-family:'Liberation Sans', sans-serif;transform:scaleX(0.9252);">crc_iso_in</span><span style="left:546.55px;top:364.68px;font-size:8.7px;line-height:10.44px;color:#d0d4da;font-family:'Liberation Sans', sans-serif;transform:scaleX(1.0199);">/top/U1/checker/...</span><span style="left:637.65px;top:364.68px;font-size:8.7px;line-height:10.44px;color:#d0d4da;font-family:'Liberation Sans', sans-serif;transform:scaleX(0.9641);">../UPF_version/...</span><span style="left:739.40px;top:364.68px;font-size:8.7px;line-height:10.44px;color:#d0d4da;font-family:'Liberation Sans', sans-serif;transform:scaleX(0.8381);">ERROR: E</span><span style="left:804.20px;top:364.68px;font-size:8.7px;line-height:10.44px;color:#d0d4da;font-family:'Liberation Sans', sans-serif;transform:scaleX(0.8821);">No</span><div style="left:884.2px;top:369.4px;width:1.1999999999999318px;height:1.0px;background:#9aa3ad;"></div><div style="left:406.5px;top:378.9px;width:15.5px;height:15.600000000000023px;background:#3e4a5a;"></div><div style="left:422px;top:394px;width:379px;height:1px;background:#2e3a48;"></div><div style="left:480.0px;top:378.4px;width:1.0px;height:16.600000000000023px;background:#2e3a48;"></div><div style="left:537.9px;top:378.4px;width:1.0px;height:16.600000000000023px;background:#2e3a48;"></div><div style="left:626.0px;top:378.4px;width:1.0px;height:16.600000000000023px;background:#2e3a48;"></div><div style="left:712.7px;top:378.4px;width:1.0px;height:16.600000000000023px;background:#2e3a48;"></div><div style="left:800.5px;top:378.4px;width:1.0px;height:16.600000000000023px;background:#2e3a48;"></div><div style="left:801px;top:378.9px;width:86px;height:15.600000000000023px;background:#1d232d;border:1px solid #2e3a48;border-top-color:#56677a;border-left-color:#56677a;"></div><div style="left:882px;top:379.4px;width:1px;height:14.600000000000023px;background:#3a4656;"></div><span style="left:409.30px;top:382.08px;font-size:8.7px;line-height:10.44px;color:#d0d4da;font-family:'Liberation Sans', sans-serif;transform:scaleX(0.9202);">12</span><span style="left:441.95px;top:382.08px;font-size:8.7px;line-height:10.44px;color:#d0d4da;font-family:'Liberation Sans', sans-serif;transform:scaleX(0.8902);">R140</span><span style="left:491.40px;top:382.08px;font-size:8.7px;line-height:10.44px;color:#d0d4da;font-family:'Liberation Sans', sans-serif;transform:scaleX(0.9252);">crc_iso_in</span><span style="left:546.55px;top:382.08px;font-size:8.7px;line-height:10.44px;color:#d0d4da;font-family:'Liberation Sans', sans-serif;transform:scaleX(1.0199);">/top/U1/checker/...</span><span style="left:637.65px;top:382.08px;font-size:8.7px;line-height:10.44px;color:#d0d4da;font-family:'Liberation Sans', sans-serif;transform:scaleX(0.9641);">../UPF_version/...</span><span style="left:739.40px;top:382.08px;font-size:8.7px;line-height:10.44px;color:#d0d4da;font-family:'Liberation Sans', sans-serif;transform:scaleX(0.8381);">ERROR: E</span><span style="left:804.20px;top:382.08px;font-size:8.7px;line-height:10.44px;color:#d0d4da;font-family:'Liberation Sans', sans-serif;transform:scaleX(0.8821);">No</span><div style="left:884.2px;top:386.79999999999995px;width:1.1999999999999318px;height:1.0px;background:#9aa3ad;"></div><div style="left:887px;top:187px;width:1px;height:208px;background:#4a5868;"></div><div style="left:1051px;top:177px;width:6px;height:218px;background:#151a22;"></div><div style="left:1053px;top:185px;width:4px;height:43px;background:#5a7590;border-radius:2px;"></div><div style="left:404px;top:395px;width:653px;height:2px;background:#2a3542;"></div><div style="left:404.2px;top:399px;width:16.600000000000023px;height:12px;background:#3b4654;"></div><span style="left:406.70px;top:400.60px;font-size:8px;line-height:9.60px;color:#cfd4db;font-family:'Liberation Sans', sans-serif;transform:scaleX(0.8999);">File</span><div style="left:422.8px;top:399px;width:16.19999999999999px;height:12px;background:#3b4654;"></div><span style="left:425.30px;top:400.60px;font-size:8px;line-height:9.60px;color:#cfd4db;font-family:'Liberation Sans', sans-serif;transform:scaleX(0.9321);">Set</span><div style="left:441px;top:399px;width:28px;height:12px;background:#3b4654;"></div><span style="left:443.50px;top:400.60px;font-size:8px;line-height:9.60px;color:#cfd4db;font-family:'Liberation Sans', sans-serif;transform:scaleX(1.0138);">Result</span><div style="left:470.5px;top:399px;width:72.5px;height:12px;background:#4a6a8c;"></div><div style="left:470.5px;top:399px;width:72.5px;height:1.6000000000000227px;background:#3d8fd6;"></div><span style="left:473.00px;top:400.60px;font-size:8px;line-height:9.60px;color:#cfd4db;font-family:'Liberation Sans', sans-serif;transform:scaleX(1.0542);">Verification Result</span><span style="left:118.50px;top:420.90px;font-size:8px;line-height:9.60px;color:#c9ced6;font-family:'Liberation Sans', sans-serif;transform:scaleX(0.8856);">Console</span><svg style="left:380px;top:421px" width="17" height="10"><ellipse cx="4.5" cy="5" rx="3.6" ry="3.3" fill="none" stroke="#e6e8ec" stroke-width="1.5"/><line x1="2.2" y1="7.6" x2="6.8" y2="2.4" stroke="#e6e8ec" stroke-width="1.3"/><path d="M10.2,1.8 L15.4,8.2 M15.4,1.8 L10.2,8.2" stroke="#e6e8ec" stroke-width="1.6"/></svg><div style="left:121.6px;top:441.2px;width:83.4px;height:1.400000000000034px;background:#16748c;"></div><span style="left:121.70px;top:447.20px;font-size:8px;line-height:9.60px;color:#20c4dc;font-family:'Liberation Sans', sans-serif;transform:scaleX(1.0504);">No set domain function rule ID rule name note result</span><div style="left:121.6px;top:460.59999999999997px;width:5.400000000000006px;height:1.2000000000000455px;background:#16748c;"></div><div style="left:131.7px;top:460.59999999999997px;width:5.300000000000011px;height:1.2000000000000455px;background:#16748c;"></div><div style="left:140.3px;top:460.59999999999997px;width:13.699999999999989px;height:1.2000000000000455px;background:#16748c;"></div><div style="left:157px;top:460.59999999999997px;width:18px;height:1.2000000000000455px;background:#16748c;"></div><div style="left:177.3px;top:460.59999999999997px;width:17.69999999999999px;height:1.2000000000000455px;background:#16748c;"></div><div style="left:197px;top:460.59999999999997px;width:21px;height:1.2000000000000455px;background:#16748c;"></div><div style="left:220px;top:460.59999999999997px;width:10px;height:1.2000000000000455px;background:#16748c;"></div><div style="left:232px;top:460.59999999999997px;width:14px;height:1.2000000000000455px;background:#16748c;"></div><span style="left:120.40px;top:477.00px;font-size:8px;line-height:9.60px;color:#20c4dc;font-family:'Liberation Sans', sans-serif;transform:scaleX(1.0204);">NONE :  attribution rules checking results</span><div style="left:121.6px;top:490.4px;width:79.80000000000001px;height:1.400000000000034px;background:#16748c;"></div><span style="left:121.70px;top:496.70px;font-size:8px;line-height:9.60px;color:#20c4dc;font-family:'Liberation Sans', sans-serif;transform:scaleX(1.0583);">No attribute type elements rule ID rule name note result</span><div style="left:121.6px;top:511.0px;width:5.400000000000006px;height:1.2000000000000455px;background:#16748c;"></div><div style="left:131.7px;top:511.0px;width:33.30000000000001px;height:1.2000000000000455px;background:#16748c;"></div><div style="left:167px;top:511.0px;width:19px;height:1.2000000000000455px;background:#16748c;"></div><div style="left:188.5px;top:511.0px;width:16.5px;height:1.2000000000000455px;background:#16748c;"></div><div style="left:207px;top:511.0px;width:20px;height:1.2000000000000455px;background:#16748c;"></div><div style="left:231px;top:511.0px;width:9px;height:1.2000000000000455px;background:#16748c;"></div><div style="left:242px;top:511.0px;width:16px;height:1.2000000000000455px;background:#16748c;"></div><span style="left:120.40px;top:526.00px;font-size:8px;line-height:9.60px;color:#20c4dc;font-family:'Liberation Sans', sans-serif;transform:scaleX(1.0330);">NONE :  repeater strategy rules checking results</span><div style="left:121.6px;top:539.1px;width:95.9px;height:1.3999999999999773px;background:#16748c;"></div><span style="left:121.70px;top:545.70px;font-size:8px;line-height:9.60px;color:#20c4dc;font-family:'Liberation Sans', sans-serif;transform:scaleX(1.0331);">No name domain applies_to rule ID rule name note</span><span style="left:325.00px;top:545.70px;font-size:8px;line-height:9.60px;color:#20c4dc;font-family:'Liberation Sans', sans-serif;transform:scaleX(1.0735);">result</span><div style="left:121.6px;top:559.1999999999999px;width:5.400000000000006px;height:1.2000000000000455px;background:#16748c;"></div><div style="left:131.7px;top:559.1999999999999px;width:20.30000000000001px;height:1.2000000000000455px;background:#16748c;"></div><div style="left:154px;top:559.1999999999999px;width:26px;height:1.2000000000000455px;background:#16748c;"></div><div style="left:182px;top:559.1999999999999px;width:16px;height:1.2000000000000455px;background:#16748c;"></div><div style="left:200px;top:559.1999999999999px;width:20px;height:1.2000000000000455px;background:#16748c;"></div><div style="left:222px;top:559.1999999999999px;width:16px;height:1.2000000000000455px;background:#16748c;"></div><div style="left:240px;top:559.1999999999999px;width:25px;height:1.2000000000000455px;background:#16748c;"></div><div style="left:268px;top:559.1999999999999px;width:50px;height:1.2000000000000455px;background:#16748c;"></div><span style="left:123.20px;top:565.80px;font-size:8px;line-height:9.60px;color:#20c4dc;font-family:'Liberation Sans', sans-serif;transform:scaleX(0.7860);">0</span><span style="left:190.60px;top:565.80px;font-size:8px;line-height:9.60px;color:#20c4dc;font-family:'Liberation Sans', sans-serif;transform:scaleX(0.8366);">R204</span><span style="left:219.30px;top:565.80px;font-size:8px;line-height:9.60px;color:#20c4dc;font-family:'Liberation Sans', sans-serif;transform:scaleX(1.0248);">RPTR missing repeater strategy missing</span><div style="left:387.5px;top:441px;width:1.5px;height:154px;background:#2a3340;"></div><svg style="left:385px;top:438px" width="6" height="160"><path d="M1,5 L3,2.5 L5,5" fill="none" stroke="#8a94a0" stroke-width="0.8"/><circle cx="3" cy="147.6" r="2.8" fill="#6a8aa8"/><path d="M1,154 L3,156.5 L5,154" fill="none" stroke="#8a94a0" stroke-width="0.8"/></svg><div style="left:124px;top:600.9px;width:259px;height:5.7000000000000455px;background:#1a2029;"></div><div style="left:127.3px;top:600.9px;width:246.09999999999997px;height:5.7000000000000455px;background:#5c7894;border-radius:3px;"></div><svg style="left:120px;top:600px" width="270" height="8"><path d="M4.5,1.8 L2.5,3.8 L4.5,5.8" fill="none" stroke="#8a94a0" stroke-width="0.9"/><path d="M258.5,1.8 L260.5,3.8 L258.5,5.8" fill="none" stroke="#8a94a0" stroke-width="0.9"/></svg><span style="left:120.50px;top:618.20px;font-size:8px;line-height:9.60px;color:#38383c;font-family:'Liberation Sans', sans-serif;">lpv_shell &gt;</span><span style="left:118.50px;top:678.70px;font-size:8px;line-height:9.60px;color:#c9ced6;font-family:'Liberation Sans', sans-serif;transform:scaleX(0.9500);">Set File :</span><span style="left:407.50px;top:420.90px;font-size:8px;line-height:9.60px;color:#c9ced6;font-family:'Liberation Sans', sans-serif;transform:scaleX(0.8881);">RTL Level</span><svg style="left:1047px;top:421px" width="10" height="10"><ellipse cx="4.5" cy="5" rx="3.6" ry="3.3" fill="none" stroke="#e6e8ec" stroke-width="1.5"/><line x1="2.2" y1="7.6" x2="6.8" y2="2.4" stroke="#e6e8ec" stroke-width="1.3"/></svg><div style="left:406.9px;top:435.8px;width:100.40000000000003px;height:13.199999999999989px;background:#3e4a5a;"></div><div style="left:508.3px;top:435.8px;width:73.69999999999999px;height:13.199999999999989px;background:#3e4a5a;"></div><div style="left:583.3px;top:435.8px;width:15.5px;height:13.199999999999989px;background:#3e4a5a;"></div><span style="left:409.00px;top:437.60px;font-size:8px;line-height:9.60px;color:#c9ced6;font-family:'Liberation Sans', sans-serif;transform:scaleX(0.9587);">Instance</span><span style="left:511.80px;top:437.60px;font-size:8px;line-height:9.60px;color:#c9ced6;font-family:'Liberation Sans', sans-serif;transform:scaleX(0.9143);">Module</span><span style="left:585.50px;top:437.60px;font-size:8px;line-height:9.60px;color:#c9ced6;font-family:'Liberation Sans', sans-serif;transform:scaleX(0.8851);">Dea</span><div style="left:406.9px;top:449px;width:191.89999999999998px;height:15px;background:#394555;"></div><div style="left:406.9px;top:449px;width:10.600000000000023px;height:15px;background:#3a6ea5;"></div><svg style="left:408px;top:453px" width="9" height="6"><path d="M1.8,1.8 Q4.5,4.6 7.2,1.8" fill="none" stroke="#e8eef5" stroke-width="1.2"/></svg><span style="left:421.50px;top:451.70px;font-size:8px;line-height:9.60px;color:#d6dae0;font-family:'Liberation Sans', sans-serif;transform:scaleX(0.7817);">U1</span><span style="left:513.00px;top:451.70px;font-size:8px;line-height:9.60px;color:#d6dae0;font-family:'Liberation Sans', sans-serif;transform:scaleX(1.0155);">lvds_system</span><span style="left:586.90px;top:451.10px;font-size:9px;line-height:10.80px;color:#d6dae0;font-family:'Liberation Sans', sans-serif;transform:scaleX(0.7087);">TOP</span><span style="left:433.50px;top:467.80px;font-size:8px;line-height:9.60px;color:#d0d4da;font-family:'Liberation Sans', sans-serif;transform:scaleX(1.0980);">transmitter</span><span style="left:513.00px;top:467.80px;font-size:8px;line-height:9.60px;color:#d0d4da;font-family:'Liberation Sans', sans-serif;transform:scaleX(1.0757);">piso</span><span style="left:586.90px;top:467.20px;font-size:9px;line-height:10.80px;color:#d0d4da;font-family:'Liberation Sans', sans-serif;transform:scaleX(0.7871);">TX_</span><div style="left:424px;top:472.1px;width:5px;height:1.0px;background:#6d7580;"></div><span style="left:433.50px;top:483.40px;font-size:8px;line-height:9.60px;color:#d0d4da;font-family:'Liberation Sans', sans-serif;transform:scaleX(1.0157);">receiver</span><span style="left:513.00px;top:483.40px;font-size:8px;line-height:9.60px;color:#d0d4da;font-family:'Liberation Sans', sans-serif;transform:scaleX(1.0757);">sipo</span><span style="left:586.90px;top:482.80px;font-size:9px;line-height:10.80px;color:#d0d4da;font-family:'Liberation Sans', sans-serif;transform:scaleX(0.6836);">REC</span><div style="left:424px;top:487.70000000000005px;width:5px;height:1.0px;background:#6d7580;"></div><span style="left:433.50px;top:499.00px;font-size:8px;line-height:9.60px;color:#d0d4da;font-family:'Liberation Sans', sans-serif;">checker</span><span style="left:513.00px;top:499.00px;font-size:8px;line-height:9.60px;color:#d0d4da;font-family:'Liberation Sans', sans-serif;">checker</span><span style="left:586.90px;top:498.40px;font-size:9px;line-height:10.80px;color:#d0d4da;font-family:'Liberation Sans', sans-serif;transform:scaleX(0.6836);">CHE</span><div style="left:424px;top:503.3px;width:5px;height:1.0px;background:#6d7580;"></div><span style="left:433.50px;top:514.60px;font-size:8px;line-height:9.60px;color:#d0d4da;font-family:'Liberation Sans', sans-serif;transform:scaleX(1.0720);">power_controller</span><span style="left:513.00px;top:514.60px;font-size:8px;line-height:9.60px;color:#d0d4da;font-family:'Liberation Sans', sans-serif;transform:scaleX(1.0889);">power_controller</span><span style="left:586.90px;top:514.00px;font-size:9px;line-height:10.80px;color:#d0d4da;font-family:'Liberation Sans', sans-serif;transform:scaleX(0.7871);">TX_</span><div style="left:424px;top:518.9px;width:5px;height:1.0px;background:#6d7580;"></div><span style="left:433.50px;top:530.20px;font-size:8px;line-height:9.60px;color:#d0d4da;font-family:'Liberation Sans', sans-serif;transform:scaleX(1.0052);">rx_sw</span><span style="left:586.90px;top:529.60px;font-size:9px;line-height:10.80px;color:#d0d4da;font-family:'Liberation Sans', sans-serif;transform:scaleX(0.6836);">REC</span><div style="left:424px;top:534.5px;width:5px;height:1.0px;background:#6d7580;"></div><span style="left:433.50px;top:545.80px;font-size:8px;line-height:9.60px;color:#d0d4da;font-family:'Liberation Sans', sans-serif;transform:scaleX(1.0044);">crc_sw</span><span style="left:586.90px;top:545.20px;font-size:9px;line-height:10.80px;color:#d0d4da;font-family:'Liberation Sans', sans-serif;transform:scaleX(0.6836);">CHE</span><div style="left:424px;top:550.1px;width:5px;height:1.0px;background:#6d7580;"></div><span style="left:433.50px;top:561.40px;font-size:8px;line-height:9.60px;color:#d0d4da;font-family:'Liberation Sans', sans-serif;transform:scaleX(0.9922);">rx_frame_UPF_ISO</span><span style="left:586.90px;top:560.80px;font-size:9px;line-height:10.80px;color:#d0d4da;font-family:'Liberation Sans', sans-serif;transform:scaleX(0.7087);">TOP</span><div style="left:424px;top:565.7px;width:5px;height:1.0px;background:#6d7580;"></div><div style="left:423px;top:464px;width:1px;height:102.70000000000005px;background:#6d7580;"></div><div style="left:598.8px;top:435px;width:2.6000000000000227px;height:237px;background:#1e2631;"></div><div style="left:601.4px;top:435px;width:4.600000000000023px;height:237px;background:#3a4656;"></div><div style="left:409px;top:661.7px;width:188px;height:6.0px;background:#1a2029;border-radius:3px;"></div><div style="left:416px;top:661.7px;width:150.79999999999995px;height:6.0px;background:#5c7894;border-radius:3px;"></div><div style="left:566.8px;top:662.2px;width:23.800000000000068px;height:5.0px;background:transparent;border:1px solid #3a4656;border-radius:3px;"></div><svg style="left:405px;top:661px" width="195" height="8"><path d="M4.5,2 L2.8,4 L4.5,6" fill="none" stroke="#8a94a0" stroke-width="0.9"/><path d="M189.5,2 L191.2,4 L189.5,6" fill="none" stroke="#8a94a0" stroke-width="0.9"/></svg><div style="left:607px;top:436px;width:30.5px;height:224px;background:#e4e4e4;"></div><div style="left:637.5px;top:436px;width:7.7000000000000455px;height:224px;background:#b4b4b6;"></div><span style="left:624.20px;top:437.26px;font-size:8.4px;line-height:10.08px;color:#3e4045;font-family:'Liberation Sans', sans-serif;transform:scaleX(0.7706);">1</span><span style="left:624.20px;top:448.32px;font-size:8.4px;line-height:10.08px;color:#3e4045;font-family:'Liberation Sans', sans-serif;transform:scaleX(0.7706);">2</span><span style="left:624.20px;top:459.38px;font-size:8.4px;line-height:10.08px;color:#3e4045;font-family:'Liberation Sans', sans-serif;transform:scaleX(0.7706);">3</span><span style="left:624.20px;top:470.44px;font-size:8.4px;line-height:10.08px;color:#3e4045;font-family:'Liberation Sans', sans-serif;transform:scaleX(0.7706);">4</span><span style="left:624.20px;top:481.50px;font-size:8.4px;line-height:10.08px;color:#3e4045;font-family:'Liberation Sans', sans-serif;transform:scaleX(0.7706);">5</span><span style="left:624.20px;top:492.56px;font-size:8.4px;line-height:10.08px;color:#3e4045;font-family:'Liberation Sans', sans-serif;transform:scaleX(0.7706);">6</span><span style="left:624.20px;top:503.62px;font-size:8.4px;line-height:10.08px;color:#3e4045;font-family:'Liberation Sans', sans-serif;transform:scaleX(0.7706);">7</span><span style="left:624.20px;top:514.68px;font-size:8.4px;line-height:10.08px;color:#3e4045;font-family:'Liberation Sans', sans-serif;transform:scaleX(0.7706);">8</span><span style="left:624.20px;top:525.74px;font-size:8.4px;line-height:10.08px;color:#3e4045;font-family:'Liberation Sans', sans-serif;transform:scaleX(0.7706);">9</span><span style="left:620.60px;top:536.80px;font-size:8.4px;line-height:10.08px;color:#3e4045;font-family:'Liberation Sans', sans-serif;transform:scaleX(0.7719);">10</span><span style="left:620.60px;top:547.86px;font-size:8.4px;line-height:10.08px;color:#3e4045;font-family:'Liberation Sans', sans-serif;transform:scaleX(0.8273);">11</span><span style="left:620.60px;top:558.92px;font-size:8.4px;line-height:10.08px;color:#3e4045;font-family:'Liberation Sans', sans-serif;transform:scaleX(0.7719);">12</span><span style="left:620.60px;top:569.98px;font-size:8.4px;line-height:10.08px;color:#3e4045;font-family:'Liberation Sans', sans-serif;transform:scaleX(0.7719);">13</span><span style="left:620.60px;top:581.04px;font-size:8.4px;line-height:10.08px;color:#3e4045;font-family:'Liberation Sans', sans-serif;transform:scaleX(0.7719);">14</span><span style="left:620.60px;top:592.10px;font-size:8.4px;line-height:10.08px;color:#3e4045;font-family:'Liberation Sans', sans-serif;transform:scaleX(0.7719);">15</span><span style="left:620.60px;top:603.16px;font-size:8.4px;line-height:10.08px;color:#3e4045;font-family:'Liberation Sans', sans-serif;transform:scaleX(0.7719);">16</span><span style="left:620.60px;top:614.22px;font-size:8.4px;line-height:10.08px;color:#3e4045;font-family:'Liberation Sans', sans-serif;transform:scaleX(0.7719);">17</span><span style="left:620.60px;top:625.28px;font-size:8.4px;line-height:10.08px;color:#3e4045;font-family:'Liberation Sans', sans-serif;transform:scaleX(0.7719);">18</span><span style="left:620.60px;top:636.34px;font-size:8.4px;line-height:10.08px;color:#3e4045;font-family:'Liberation Sans', sans-serif;transform:scaleX(0.7719);">19</span><span style="left:620.60px;top:647.40px;font-size:8.4px;line-height:10.08px;color:#3e4045;font-family:'Liberation Sans', sans-serif;transform:scaleX(0.7719);">20</span><div style="left:630.5px;top:438.8px;width:7px;height:7px;border-radius:50%;background:#2ecc2e;box-shadow:0 0 0 0.6px #1a8a1a;"></div><span style="left:646.00px;top:437.50px;font-size:8px;line-height:9.60px;color:#b9453c;font-family:'Liberation Sans', sans-serif;transform:scaleX(0.9858);"><span style="color:#2d2da6;font-weight:bold;">module</span><span style="color:#b9453c;"> top (clk, reset_n, frame_in, data_in, power_data, data_out, data_ok) ;</span></span><span style="left:655.00px;top:448.56px;font-size:8px;line-height:9.60px;color:#b9453c;font-family:'Liberation Sans', sans-serif;transform:scaleX(1.0134);"><span style="color:#3a9e36;">input </span><span style="color:#555;">[15:0] </span><span style="color:#3a9e36;">data_in </span><span style="color:#555;">;</span></span><span style="left:655.00px;top:459.62px;font-size:8px;line-height:9.60px;color:#b9453c;font-family:'Liberation Sans', sans-serif;transform:scaleX(1.0091);"><span style="color:#3a9e36;">input </span><span style="color:#555;">[2:0] </span><span style="color:#3a9e36;">power_data </span><span style="color:#555;">;</span></span><span style="left:655.00px;top:470.68px;font-size:8px;line-height:9.60px;color:#b9453c;font-family:'Liberation Sans', sans-serif;transform:scaleX(1.0154);"><span style="color:#3a9e36;">output </span><span style="color:#555;">[15:0] </span><span style="color:#3a9e36;">data_out </span><span style="color:#555;">;</span></span><span style="left:655.00px;top:481.74px;font-size:8px;line-height:9.60px;color:#b9453c;font-family:'Liberation Sans', sans-serif;transform:scaleX(0.9889);"><span style="color:#3a9e36;">input clk, reset_n, frame_in </span><span style="color:#555;">;</span></span><span style="left:655.00px;top:492.80px;font-size:8px;line-height:9.60px;color:#b9453c;font-family:'Liberation Sans', sans-serif;transform:scaleX(0.9967);"><span style="color:#3a9e36;">output data_ok </span><span style="color:#555;">;</span></span><span style="left:655.00px;top:503.86px;font-size:8px;line-height:9.60px;color:#b9453c;font-family:'Liberation Sans', sans-serif;transform:scaleX(0.9925);"><span style="color:#2d2da6;font-weight:bold;">wire</span><span style="color:#b9453c;"> serial_out, tx_frame, rx_frame </span><span style="color:#555;">;</span></span><span style="left:655.00px;top:514.92px;font-size:8px;line-height:9.60px;color:#b9453c;font-family:'Liberation Sans', sans-serif;transform:scaleX(0.9616);"><span style="color:#2d2da6;font-weight:bold;">wire</span><span style="color:#b9453c;"> rx_iso, crc_iso, crc_save, crc_restore, rx_sd, crc_sd, rx_power_ack, crc_power_ack </span><span style="color:#555;">;</span></span><span style="left:655.00px;top:525.98px;font-size:8px;line-height:9.60px;color:#b9453c;font-family:'Liberation Sans', sans-serif;transform:scaleX(0.9814);"><span style="color:#b9453c;">lvds_system </span><span style="color:#5a5ae0;">U1</span><span style="color:#b9453c;"> (clk, reset_n, frame_in, data_in, power_data, data_out, data_ok) </span><span style="color:#555;">;</span></span><span style="left:646.00px;top:537.04px;font-size:8px;line-height:9.60px;color:#b9453c;font-family:'Liberation Sans', sans-serif;transform:scaleX(1.0218);"><span style="color:#2d2da6;font-weight:bold;">endmodule</span></span><span style="left:646.00px;top:581.28px;font-size:8px;line-height:9.60px;color:#b9453c;font-family:'Liberation Sans', sans-serif;transform:scaleX(0.9857);"><span style="color:#2d2da6;font-weight:bold;">module</span><span style="color:#b9453c;"> lvds_system (clk, reset_n, frame_in, data_in, power_data, data_out, data_ok) </span><span style="color:#555;">;</span></span><span style="left:655.00px;top:592.34px;font-size:8px;line-height:9.60px;color:#b9453c;font-family:'Liberation Sans', sans-serif;transform:scaleX(1.0147);"><span style="color:#3a9e36;">input </span><span style="color:#555;">[15:0] </span><span style="color:#3a9e36;">data_in </span><span style="color:#555;">;</span></span><span style="left:655.00px;top:603.40px;font-size:8px;line-height:9.60px;color:#b9453c;font-family:'Liberation Sans', sans-serif;transform:scaleX(1.0222);"><span style="color:#3a9e36;">input </span><span style="color:#555;">[3:0] </span><span style="color:#3a9e36;">power_data </span><span style="color:#555;">;</span></span><span style="left:655.00px;top:614.46px;font-size:8px;line-height:9.60px;color:#b9453c;font-family:'Liberation Sans', sans-serif;transform:scaleX(1.0142);"><span style="color:#3a9e36;">output </span><span style="color:#555;">[15:0] </span><span style="color:#3a9e36;">data_out </span><span style="color:#555;">;</span></span><span style="left:655.00px;top:625.52px;font-size:8px;line-height:9.60px;color:#b9453c;font-family:'Liberation Sans', sans-serif;transform:scaleX(0.9879);"><span style="color:#3a9e36;">input clk, reset_n, frame_in </span><span style="color:#555;">;</span></span><span style="left:655.00px;top:636.58px;font-size:8px;line-height:9.60px;color:#b9453c;font-family:'Liberation Sans', sans-serif;transform:scaleX(1.0071);"><span style="color:#3a9e36;">output data_ok </span><span style="color:#555;">;</span></span><span style="left:655.00px;top:647.64px;font-size:8px;line-height:9.60px;color:#b9453c;font-family:'Liberation Sans', sans-serif;transform:scaleX(0.9940);"><span style="color:#2d2da6;font-weight:bold;">wire</span><span style="color:#b9453c;"> serial_out, tx_frame, rx_frame </span><span style="color:#555;">;</span></span><div style="left:607px;top:658px;width:444px;height:2px;background:#f4f4f4;"></div><div style="left:607px;top:660px;width:444px;height:12px;background:#1a2029;"></div><div style="left:614px;top:661.7px;width:431px;height:6.0px;background:#151a22;border-radius:3px;"></div><div style="left:617px;top:661.7px;width:147px;height:6.0px;background:#5c7894;border-radius:3px;"></div><svg style="left:607px;top:661px" width="444" height="8"><path d="M5,2 L3.3,4 L5,6" fill="none" stroke="#8a94a0" stroke-width="0.9"/><circle cx="441" cy="4" r="0.8" fill="#8a94a0"/></svg><div style="left:1051px;top:436px;width:6px;height:236px;background:#151a22;"></div><div style="left:1053px;top:447px;width:4px;height:11px;background:#5a7590;border-radius:2px;"></div><div style="left:110px;top:683px;width:110px;height:9px;background:#ffffff;"></div>
</body></html>
